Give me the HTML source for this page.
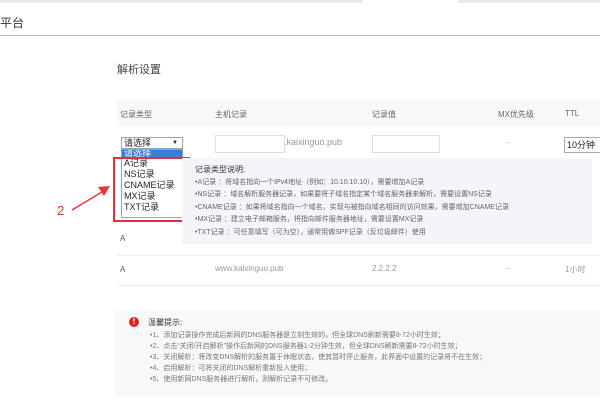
<!DOCTYPE html>
<html><head><meta charset="utf-8"><style>
body{margin:0;width:600px;height:400px;background:#fff;position:relative;overflow:hidden;font-family:"Liberation Sans","Noto Sans CJK SC",sans-serif;color:#555}
.a{position:absolute;white-space:nowrap}
.s{font-size:8px;color:#666}
</style></head><body>
<div class="a" style="left:0;top:0;width:600px;height:3px;background:#e6ebf0"></div>
<div class="a" style="left:363px;top:0;width:95px;height:3px;background:#fff"></div>
<div class="a" style="left:0;top:14px;font-size:12px;color:#333">平台</div>
<div class="a" style="left:0;top:35px;width:600px;height:1px;background:#bbb"></div>
<div class="a" style="left:117px;top:61px;font-size:11px;color:#444">解析设置</div>
<div class="a" style="left:117px;top:101px;width:483px;height:25px;background:#f7f8fa"></div>
<div class="a s" style="left:120px;top:109px">记录类型</div>
<div class="a s" style="left:215px;top:109px">主机记录</div>
<div class="a s" style="left:372px;top:109px">记录值</div>
<div class="a s" style="left:498px;top:109px">MX优先级</div>
<div class="a s" style="left:565px;top:109px">TTL</div>
<div class="a" style="left:121px;top:137px;width:62px;height:12px;border:1px solid #8ab;font-size:9px;color:#222;line-height:11px;padding-left:2px;box-sizing:border-box">请选择<span style="position:absolute;right:4px;font-size:6px">▼</span></div>
<div class="a" style="left:215px;top:135px;width:68px;height:16px;border:1px solid #ddd"></div>
<div class="a" style="left:284px;top:137px;font-size:9px;color:#999">.kaixinguo.pub</div>
<div class="a" style="left:372px;top:135px;width:66px;height:16px;border:1px solid #ddd"></div>
<div class="a" style="left:505px;top:138px;font-size:8px;color:#bbb">--</div>
<div class="a" style="left:564px;top:137px;width:50px;height:14px;border:1px solid #aaa;font-size:9px;color:#222;padding-left:2px;line-height:14px">10分钟</div>
<div class="a" style="left:121px;top:149px;width:62px;height:69px;border:1px solid #8ab;background:#fff;font-size:9px;color:#222;line-height:11px;box-sizing:border-box">
<div style="background:#3b7ed8;color:#fff;height:7px;line-height:7px;overflow:hidden;padding-left:2px">请选择</div>
<div style="padding-left:2px;margin-top:1px">A记录<br>NS记录<br>CNAME记录<br>MX记录<br>TXT记录</div></div>
<div class="a" style="left:113px;top:157px;width:77px;height:65px;border:2px solid #d33;box-sizing:border-box"></div>
<div class="a" style="left:182px;top:158px;width:410px;height:86px;background:#f3f5f8"></div>
<div class="a" style="left:195px;top:164px;font-size:8px;color:#333;line-height:12.5px">记录类型说明:<div style="font-size:7px;color:#666">
•A记录 ：将域名指向一个IPv4地址（例如：10.10.10.10），需要增加A记录<br>
•NS记录 ：域名解析服务器记录，如果要将子域名指定某个域名服务器来解析，需要设置NS记录<br>
•CNAME记录 ：如果将域名指向一个域名，实现与被指向域名相同的访问效果，需要增加CNAME记录<br>
•MX记录 ：建立电子邮箱服务，将指向邮件服务器地址，需要设置MX记录<br>
•TXT记录 ：可任意填写（可为空），通常用做SPF记录（反垃圾邮件）使用</div></div>
<svg class="a" style="left:60px;top:170px" width="60" height="50"><line x1="12" y1="40" x2="42" y2="22" stroke="#e33" stroke-width="1.5"/><polygon points="50,16 38,17 44,26" fill="#e33"/></svg>
<div class="a" style="left:57px;top:203px;font-size:13px;color:#d33">2</div>
<div class="a" style="left:120px;top:234px;font-size:8px">A</div>
<div class="a" style="left:117px;top:255px;width:483px;height:1px;background:#eee"></div>
<div class="a" style="left:120px;top:265px;font-size:8px">A</div>
<div class="a" style="left:215px;top:264px;font-size:8px;color:#999">www.kaixinguo.pub</div>
<div class="a" style="left:372px;top:264px;font-size:8px;color:#999">2.2.2.2</div>
<div class="a" style="left:505px;top:264px;font-size:8px;color:#bbb">--</div>
<div class="a" style="left:565px;top:264px;font-size:8px;color:#999">1小时</div>
<div class="a" style="left:117px;top:285px;width:483px;height:1px;background:#eee"></div>
<div class="a" style="left:115px;top:310px;width:485px;height:87px;background:#f7f8fa"></div>
<div class="a" style="left:129px;top:317px;width:10px;height:10px;border-radius:50%;background:#d22;color:#fff;font-size:8px;line-height:10px;text-align:center;font-weight:bold">!</div>
<div class="a" style="left:148px;top:317px;font-size:8px;color:#333">温馨提示:</div>
<div class="a" style="left:150px;top:330px;font-size:7px;color:#777;line-height:11px">
•1、添加记录操作完成后新网的DNS服务器是立刻生效的，但全球DNS刷新需要8-72小时生效；<br>
•2、点击“关闭/开启解析”操作后新网的DNS服务器1-2分钟生效，但全球DNS刷新需要8-72小时生效；<br>
•3、关闭解析：将改变DNS解析的服务置于休眠状态，使其暂时停止服务，此界面中设置的记录将不在生效；<br>
•4、启用解析：可将关闭的DNS解析重新投入使用；<br>
•5、使用新网DNS服务器进行解析，则解析记录不可修改。</div>
</body></html>
